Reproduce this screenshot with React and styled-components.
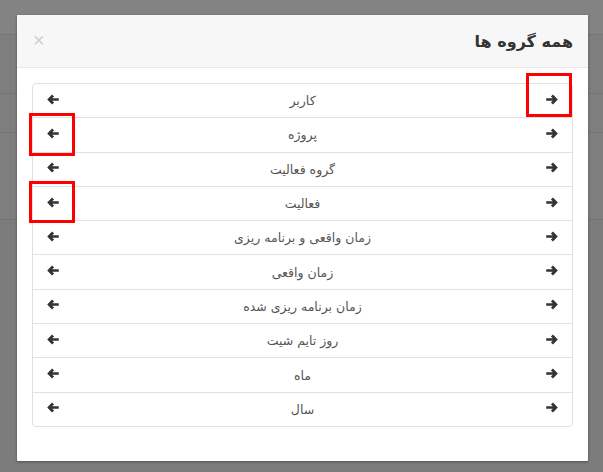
import React from 'react';
import styled, { createGlobalStyle } from 'styled-components';

const GROUPS = [
    'کاربر',
    'پروژه',
    'گروه فعالیت',
    'فعالیت',
    'زمان واقعی و برنامه ریزی',
    'زمان واقعی',
    'زمان برنامه ریزی شده',
    'روز تایم شیت',
    'ماه',
    'سال',
];

// stripes of the page hidden behind the backdrop
const BEHIND_ROWS = [34, 58, 38, 86];

// red annotation boxes drawn over the dialog
const MARKS = [
    { left: 526, top: 73, width: 46, height: 44 },
    { left: 29, top: 113, width: 46, height: 43 },
    { left: 29, top: 181, width: 46, height: 42 },
];

const GlobalStyle = createGlobalStyle`
    html, body {
        margin: 0;
        padding: 0;
    }
    body {
        font-family: "DejaVu Sans", "Noto Sans", sans-serif;
    }
`;

// thick font-awesome style arrow, pointing left; flipped for right
function ArrowIcon({ right }) {
    return (
        <svg width="12" height="11" viewBox="0 0 11 10" style={right ? { transform: 'scaleX(-1)' } : undefined}>
            <path
                d="M0.2 5 L4.6 0.5 L6.5 2.3 L4.8 3.8 H10.8 V6.2 H4.8 L6.5 7.7 L4.6 9.5 Z"
                fill="currentColor"
            />
        </svg>
    );
}

function App() {
    return (
        <Page>
            <GlobalStyle />
            <Behind>
                {BEHIND_ROWS.map((h, i) => (
                    <BehindRow key={i} $height={h} $top={i === 0} />
                ))}
            </Behind>
            <Backdrop>
                <Modal>
                    <Header>
                        <Title>همه گروه ها</Title>
                        <Close>×</Close>
                    </Header>
                    <Body>
                        <List>
                            {GROUPS.map((g) => (
                                <Item key={g}>
                                    <Arrow><ArrowIcon /></Arrow>
                                    <Label>{g}</Label>
                                    <Arrow><ArrowIcon right /></Arrow>
                                </Item>
                            ))}
                        </List>
                    </Body>
                </Modal>
            </Backdrop>
            {MARKS.map((m, i) => (
                <Mark key={i} style={m} />
            ))}
        </Page>
    );
}
export default App;

const Page = styled.div`
    position: relative;
    width: 603px;
    height: 472px;
    overflow: hidden;
    background: #7c7c7c;
`;

const Behind = styled.div`
    display: flex;
    flex-direction: column;
`;

const BehindRow = styled.div`
    height: ${(p) => p.$height}px;
    border-bottom: 1px solid #747474;
    background: ${(p) => (p.$top ? '#838383' : '#7e7e7e')};
`;

const Backdrop = styled.div`
    position: absolute;
    inset: 0;
    padding: 15px 15px 0 17px;
`;

const Modal = styled.div`
    width: 571px;
    background: #fff;
    border-radius: 1px;
    box-shadow: 0 1px 3px rgba(0, 0, 0, 0.35);
    overflow: hidden;
`;

const Header = styled.div`
    direction: rtl;
    display: flex;
    align-items: center;
    justify-content: space-between;
    height: 52px;
    padding: 0 15px 0 16px;
    background: #f7f7f7;
    border-bottom: 1px solid #e8e8e8;
`;

const Title = styled.h4`
    margin: 0;
    font-size: 16px;
    font-weight: bold;
    color: #333;
`;

const Close = styled.span`
    font-family: "Liberation Sans", sans-serif;
    font-size: 20px;
    line-height: 1;
    color: #cfcfcf;
    margin-top: -2px;
`;

const Body = styled.div`
    padding: 15px 15px 14px;
`;

const List = styled.div`
    display: flex;
    flex-direction: column;
    margin-bottom: 20px;
`;

const Item = styled.div`
    display: flex;
    align-items: center;
    justify-content: space-between;
    height: 35.3px;
    box-sizing: border-box;
    padding: 0 14px;
    margin-bottom: -1px;
    border: 1px solid #e1e1e1;
    background: #fff;

    &:first-child {
        border-radius: 4px 4px 0 0;
    }
    &:last-child {
        margin-bottom: 0;
        border-radius: 0 0 4px 4px;
    }
`;

const Arrow = styled.span`
    display: flex;
    color: #333;
    margin-top: -3px;
`;

const Label = styled.span`
    direction: rtl;
    font-size: 12.5px;
    color: #555;
`;

const Mark = styled.div`
    position: absolute;
    box-sizing: border-box;
    border: 3px solid #ff0000;
`;
